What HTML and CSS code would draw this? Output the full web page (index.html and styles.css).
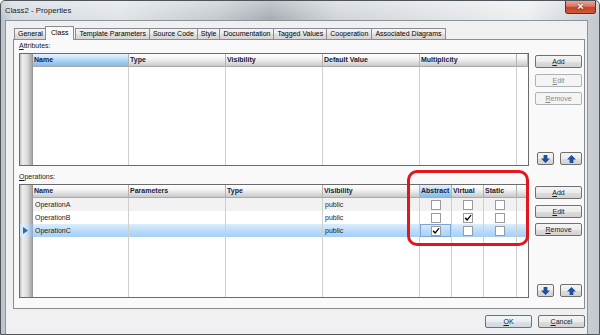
FILE: index.html
```html
<!DOCTYPE html>
<html lang="en">
<head>
    <meta charset="UTF-8">
    <title>Class2 - Properties</title>
    <link rel="stylesheet" href="styles.css">
</head>
<body>
    <div class="window">
        <div class="titlebar">
            <span class="title">Class2 - Properties</span>
            <div class="close">&#215;</div>
        </div>
        <div class="client">
            <div class="tabs">
                <div class="tab">General</div>
                <div class="tab active">Class</div>
                <div class="tab">Template Parameters</div>
                <div class="tab">Source Code</div>
                <div class="tab">Style</div>
                <div class="tab">Documentation</div>
                <div class="tab">Tagged Values</div>
                <div class="tab">Cooperation</div>
                <div class="tab">Associated Diagrams</div>
            </div>
            <div class="panel">
                <div class="label first"><u>A</u>ttributes:</div>
                <div class="section attrs">
                    <div class="grid attr-grid">
                        <div class="cell rowhead"></div>
                        <div class="cell head sel">Name</div>
                        <div class="cell head">Type</div>
                        <div class="cell head">Visibility</div>
                        <div class="cell head">Default Value</div>
                        <div class="cell head">Multiplicity</div>
                        <div class="cell head"></div>

                        <div class="cell rowhead"></div>
                        <div class="cell"></div>
                        <div class="cell"></div>
                        <div class="cell"></div>
                        <div class="cell"></div>
                        <div class="cell"></div>
                        <div class="cell last"></div>
                    </div>
                    <div class="side">
                        <div class="btn"><u>A</u>dd</div>
                        <div class="btn disabled"><u>E</u>dit</div>
                        <div class="btn disabled"><u>R</u>emove</div>
                        <div class="arrows">
                            <div class="btn arrow down">
                                <svg width="9" height="8" viewBox="0 0 9 8"><path d="M2.6 0 H6.4 V3.6 H9 L4.5 8 L0 3.6 H2.6 Z" fill="#1c4f9c"/></svg>
                            </div>
                            <div class="btn arrow up">
                                <svg width="9" height="8" viewBox="0 0 9 8"><path d="M4.5 0 L9 4.4 H6.4 V8 H2.6 V4.4 H0 Z" fill="#1c4f9c"/></svg>
                            </div>
                        </div>
                    </div>
                </div>

                <div class="label"><u>O</u>perations:</div>
                <div class="section ops">
                    <div class="grid op-grid">
                        <div class="cell rowhead"></div>
                        <div class="cell head">Name</div>
                        <div class="cell head">Parameters</div>
                        <div class="cell head">Type</div>
                        <div class="cell head">Visibility</div>
                        <div class="cell head sel">Abstract</div>
                        <div class="cell head">Virtual</div>
                        <div class="cell head">Static</div>
                        <div class="cell head"></div>

                        <div class="row alt">
                            <div class="cell rowhead"></div>
                            <div class="cell text">OperationA</div>
                            <div class="cell"></div>
                            <div class="cell"></div>
                            <div class="cell text">public</div>
                            <div class="cell box"><span class="chk"></span></div>
                            <div class="cell box"><span class="chk"></span></div>
                            <div class="cell box"><span class="chk"></span></div>
                            <div class="cell last"></div>
                        </div>
                        <div class="row">
                            <div class="cell rowhead"></div>
                            <div class="cell text">OperationB</div>
                            <div class="cell"></div>
                            <div class="cell"></div>
                            <div class="cell text">public</div>
                            <div class="cell box"><span class="chk"></span></div>
                            <div class="cell box"><span class="chk"><svg width="8" height="8" viewBox="0 0 10 10"><path d="M0.8 5.6 L2.3 4.2 L3.9 6.1 L8.3 0.8 L9.4 1.9 L4 8.9 Z" fill="#000"/></svg></span></div>
                            <div class="cell box"><span class="chk"></span></div>
                            <div class="cell last"></div>
                        </div>
                        <div class="row selected">
                            <div class="cell rowhead current">
                                <svg width="5" height="7" viewBox="0 0 5 7"><path d="M0 0 L5 3.5 L0 7 Z" fill="#2f66ad"/></svg>
                            </div>
                            <div class="cell text">OperationC</div>
                            <div class="cell"></div>
                            <div class="cell"></div>
                            <div class="cell text">public</div>
                            <div class="cell box focus"><span class="chk"><svg width="8" height="8" viewBox="0 0 10 10"><path d="M0.8 5.6 L2.3 4.2 L3.9 6.1 L8.3 0.8 L9.4 1.9 L4 8.9 Z" fill="#000"/></svg></span></div>
                            <div class="cell box"><span class="chk"></span></div>
                            <div class="cell box"><span class="chk"></span></div>
                            <div class="cell last"></div>
                        </div>

                        <div class="cell rowhead"></div>
                        <div class="cell"></div>
                        <div class="cell"></div>
                        <div class="cell"></div>
                        <div class="cell"></div>
                        <div class="cell"></div>
                        <div class="cell"></div>
                        <div class="cell"></div>
                        <div class="cell last"></div>
                    </div>
                    <div class="side">
                        <div class="btn"><u>A</u>dd</div>
                        <div class="btn"><u>E</u>dit</div>
                        <div class="btn"><u>R</u>emove</div>
                        <div class="arrows">
                            <div class="btn arrow down">
                                <svg width="9" height="8" viewBox="0 0 9 8"><path d="M2.6 0 H6.4 V3.6 H9 L4.5 8 L0 3.6 H2.6 Z" fill="#1c4f9c"/></svg>
                            </div>
                            <div class="btn arrow up">
                                <svg width="9" height="8" viewBox="0 0 9 8"><path d="M4.5 0 L9 4.4 H6.4 V8 H2.6 V4.4 H0 Z" fill="#1c4f9c"/></svg>
                            </div>
                        </div>
                    </div>
                    <!-- red highlight drawn over the flag columns -->
                    <div class="highlight"></div>
                </div>
            </div>
            <div class="footer">
                <div class="btn wide default"><u>O</u>K</div>
                <div class="btn wide"><u>C</u>ancel</div>
            </div>
        </div>
    </div>
</body>
</html>
```

FILE: styles.css
```css
body {
    margin: 0;
    padding: 0;
    font-family: "Liberation Sans", Arial, sans-serif;
    font-size: 7px;
    color: #000000;
    background-color: #ffffff;
}

.window {
    width: 600px;
    height: 335px;
    box-sizing: border-box;
    display: flex;
    flex-direction: column;
    border: 1px solid #4d545c;
    border-radius: 5px 5px 0 0;
    background: linear-gradient(to right, #b9c1c9 0%, #d3d9df 2%, #dfe3e7 20%, #c4c9ce 36%, #a6acb2 45%, #d0d4d8 56%, #e1e4e7 75%, #eceef0 88%, #c2c8ce 100%);
    overflow: hidden;
}

.titlebar {
    height: 19px;
    display: flex;
    align-items: flex-start;
    background: linear-gradient(to bottom, rgba(255, 255, 255, 0.35), rgba(255, 255, 255, 0));
}

.title {
    padding-left: 4px;
    line-height: 19px;
    font-size: 7.8px;
    color: #1a1a1a;
}

.close {
    margin-left: auto;
    margin-right: 3px;
    width: 31px;
    height: 13px;
    box-sizing: border-box;
    border: 1px solid #6e2a22;
    border-top: none;
    border-radius: 0 0 3px 3px;
    background: linear-gradient(to bottom, #e8a99b 0%, #d8735f 45%, #c44128 55%, #d05a3c 100%);
    color: #ffffff;
    font-size: 11px;
    font-weight: bold;
    line-height: 11px;
    text-align: center;
    text-shadow: 0 0 2px #5a1a10;
}

.client {
    flex: 1;
    margin: 0 11px 0 4px;
    border: 1px solid #8b939b;
    border-bottom: none;
    background-color: #f0f0f0;
    padding: 5px 2px 0 7px;
    display: flex;
    flex-direction: column;
}

.tabs {
    height: 13px;
    display: flex;
    align-items: flex-end;
    padding-left: 1px;
}

.tab {
    height: 11px;
    box-sizing: border-box;
    padding: 0 3px;
    margin-right: -1px;
    border: 1px solid #898c95;
    border-bottom: none;
    background: linear-gradient(to bottom, #f3f3f3 0%, #ebebeb 50%, #dedede 51%, #d6d6d6 100%);
    line-height: 10px;
    white-space: nowrap;
}

.tab.active {
    height: 14px;
    margin: 0 1px -1px -1px;
    padding: 0 5px;
    background: #f9f9f9;
    position: relative;
    z-index: 1;
    line-height: 11px;
}

.panel {
    flex: 1;
    border: 1px solid #898c95;
    background-color: #f9f9f9;
    padding: 0 2px 3px 5px;
    display: flex;
    flex-direction: column;
}

.label {
    height: 18px;
    box-sizing: border-box;
    padding-top: 5px;
    line-height: 12px;
    color: #1a1a1a;
}

.label.first {
    height: 13px;
    padding-top: 0;
}

.section {
    display: flex;
    gap: 6px;
    position: relative;
}

.attrs {
    height: 113px;
}

.ops {
    height: 114px;
}

.grid {
    flex: 1;
    display: grid;
    border: 1px solid #6b6b6b;
    background-color: #ffffff;
}

.attr-grid {
    grid-template-columns: 13px 96px 97px 97px 97px 97px 1fr;
    grid-template-rows: 13px 1fr;
}

.op-grid {
    grid-template-columns: 13px 96px 97px 97px 97px 32px 32px 33px 1fr;
    grid-template-rows: 13px 13px 13px 13px 1fr;
}

.row {
    display: contents;
}

.cell {
    box-sizing: border-box;
    border-right: 1px solid #cfcfcf;
    overflow: hidden;
    white-space: nowrap;
}

.cell.last {
    border-right: none;
}

.cell.rowhead {
    border-right: none;
    background: linear-gradient(to right, #bdbdbd 0%, #eeeeee 20%, #dcdcdc 55%, #a9a9a9 90%, #8e8e8e 100%);
}

.cell.head {
    border-right: 1px solid #b3b3b3;
    border-bottom: 1px solid #a9a9a9;
    background: linear-gradient(to bottom, #ffffff 0%, #f3f3f3 40%, #dedede 70%, #c9c9c9 100%);
    font-weight: bold;
    line-height: 12px;
    padding-left: 1px;
    color: #15213a;
}

.cell.head.sel {
    background: linear-gradient(to bottom, #e6f2fd 0%, #c2def8 40%, #9dcaf1 70%, #86bbec 100%);
}

.cell.text {
    padding-left: 2px;
    line-height: 13px;
    color: #222222;
}

.cell.box {
    display: flex;
    align-items: center;
    justify-content: center;
}

.row.alt > .cell {
    background-color: #f2f2f2;
}

.row.alt > .cell.rowhead {
    background: linear-gradient(to right, #bdbdbd 0%, #eeeeee 20%, #dcdcdc 55%, #a9a9a9 90%, #8e8e8e 100%);
}

.row.selected > .cell {
    background: linear-gradient(to bottom, #dcedfc 0%, #bcdcf9 50%, #a4cff5 100%);
}

.row.selected > .cell.rowhead {
    display: flex;
    align-items: center;
    padding-left: 3px;
    background: linear-gradient(to right, #c9dcef 0%, #e4f0fb 25%, #c3dbf2 60%, #8ea9c6 100%);
}

.cell.focus {
    box-shadow: inset 0 0 0 1px #7ea5d2;
}

.chk {
    width: 10px;
    height: 10px;
    box-sizing: border-box;
    border: 1px solid #9a9a9a;
    background-color: #ffffff;
    display: flex;
    align-items: center;
    justify-content: center;
}

.side {
    width: 47px;
    padding-top: 2px;
    display: flex;
    flex-direction: column;
    gap: 5.5px;
}

.btn {
    height: 13px;
    box-sizing: border-box;
    border: 1px solid #707070;
    border-radius: 2px;
    background: linear-gradient(to bottom, #f4f4f4 0%, #ececec 50%, #dedede 51%, #d2d2d2 100%);
    text-align: center;
    line-height: 11px;
    color: #1a1a1a;
}

.btn.disabled {
    border-color: #adb2b5;
    background: #f4f4f4;
    color: #8a8a8a;
}

.arrows {
    margin-top: auto;
    margin-bottom: 1px;
    padding-left: 2px;
    display: flex;
    justify-content: space-between;
}

.btn.arrow {
    display: flex;
    align-items: center;
    justify-content: center;
}

.btn.arrow.down {
    width: 17px;
}

.btn.arrow.up {
    width: 22px;
}

.highlight {
    position: absolute;
    left: 388px;
    top: -14px;
    width: 122px;
    height: 76px;
    box-sizing: border-box;
    border: 3px solid #e3161d;
    border-radius: 10px;
    pointer-events: none;
}

.footer {
    height: 25px;
    box-sizing: border-box;
    padding-top: 6px;
    display: flex;
    justify-content: flex-end;
    gap: 6px;
}

.btn.wide {
    width: 47px;
}

.btn.default {
    border-color: #3c7fb1;
    background: linear-gradient(to bottom, #f2f7fa 0%, #e8eef2 50%, #dae2e8 51%, #d0d9e0 100%);
}
```
